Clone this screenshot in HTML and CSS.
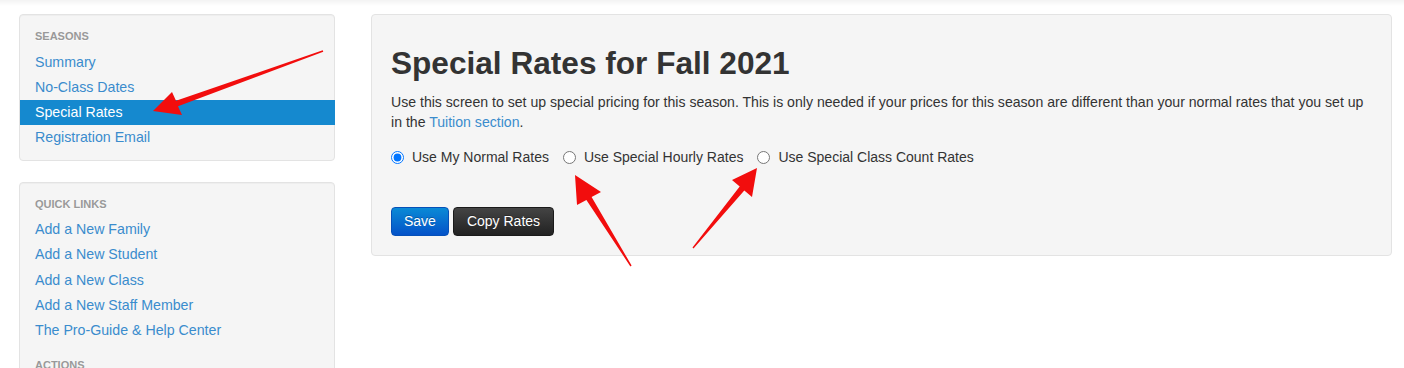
FILE: index.html
```html
<!DOCTYPE html>
<html>
<head>
<meta charset="utf-8">
<link rel="stylesheet" href="styles.css">
</head>
<body>
<div class="topshade"></div>
<div class="layout">
  <aside class="sidebar">
    <div class="well">
      <ul class="nav-list">
        <li class="nav-header">Seasons</li>
        <li><a href="#">Summary</a></li>
        <li><a href="#">No-Class Dates</a></li>
        <li class="active"><a href="#">Special Rates</a></li>
        <li><a href="#">Registration Email</a></li>
      </ul>
    </div>
    <div class="well">
      <ul class="nav-list">
        <li class="nav-header">Quick Links</li>
        <li><a href="#">Add a New Family</a></li>
        <li><a href="#">Add a New Student</a></li>
        <li><a href="#">Add a New Class</a></li>
        <li><a href="#">Add a New Staff Member</a></li>
        <li><a href="#">The Pro-Guide &amp; Help Center</a></li>
        <li class="nav-header spaced">Actions</li>
      </ul>
    </div>
  </aside>
  <main class="content">
    <div class="panel">
      <h1 class="title">Special Rates for Fall 2021</h1>
      <p class="intro">Use this screen to set up special pricing for this season. This is only needed if your prices for this season are different than your normal rates that you set up in the <a href="#">Tuition section</a>.</p>
      <div class="radios">
        <label class="radio"><input type="radio" name="rates" checked><span>Use My Normal Rates</span></label>
        <label class="radio"><input type="radio" name="rates"><span>Use Special Hourly Rates</span></label>
        <label class="radio"><input type="radio" name="rates"><span>Use Special Class Count Rates</span></label>
      </div>
      <div class="actions">
        <button class="btn btn-primary">Save</button>
        <button class="btn btn-inverse">Copy Rates</button>
      </div>
    </div>
  </main>
</div>
<svg class="annotations" width="1404" height="368" viewBox="0 0 1404 368">
  <polygon fill="#f20d0d" points="322.75,50.3 176,100.7 172,92 153,111 182,115 178,106.3 323.25,51.7"/>
  <polygon fill="#f20d0d" points="630.4,266.4 586.4,200.1 577,205 575,175 601,192 591.6,196.9 631.6,265.6"/>
  <polygon fill="#f20d0d" points="692.5,247.6 739.7,186.6 732,180 757,168 752,197 744.3,190.4 693.5,248.4"/>
</svg>
</body>
</html>
```

FILE: styles.css
```css
html, body {
  margin: 0;
  padding: 0;
  background: #fff;
  height: 368px;
  overflow: hidden;
}
body {
  font-family: "Liberation Sans", Arial, sans-serif;
  font-size: 14px;
  line-height: 20px;
  color: #333;
  position: relative;
}
.topshade {
  height: 6px;
  background: linear-gradient(#f3f3f3, #fff);
}
.layout {
  display: flex;
  align-items: flex-start;
  gap: 36px;
  padding: 8px 12px 0 19px;
}
.sidebar {
  width: 316px;
  flex: none;
  display: flex;
  flex-direction: column;
  gap: 21px;
}
.well {
  background: #f5f5f5;
  border: 1px solid #e3e3e3;
  border-radius: 4px;
  padding: 9px 0;
  box-shadow: inset 0 1px 1px rgba(0,0,0,.03);
}
.nav-list {
  list-style: none;
  margin: 0;
  padding: 0;
}
.nav-header {
  font-size: 11px;
  font-weight: bold;
  line-height: 25px;
  height: 25.5px;
  padding: 0 15px;
  color: #999;
  text-transform: uppercase;
  text-shadow: 0 1px 0 rgba(255,255,255,.5);
}
.nav-header.spaced {
  margin-top: 9px;
}
.nav-list a {
  display: block;
  padding: 3px 15px;
  line-height: 19.3px;
  font-size: 14.2px;
  color: #3a8ccd;
  text-decoration: none;
}
.nav-list .active a {
  background: #1589cf;
  color: #fff;
  margin-right: -1px;
}
.content {
  flex: 1;
}
.panel {
  background: #f5f5f5;
  border: 1px solid #e3e3e3;
  border-radius: 4px;
  padding: 19px;
}
.title {
  font-size: 31.6px;
  line-height: 40px;
  font-weight: bold;
  margin: 9px 0 9px;
  color: #333;
}
.intro {
  margin: 0 0 15px;
  padding-right: 6px;
  line-height: 20px;
  font-size: 14.1px;
}
.intro a {
  color: #3a8ccd;
  text-decoration: none;
}
.radios {
  display: flex;
  align-items: center;
  height: 20px;
  gap: 14px;
  font-size: 14px;
}
.radio {
  display: flex;
  align-items: center;
  gap: 8px;
  cursor: pointer;
}
.radio input {
  margin: 0;
  width: 13px;
  height: 13px;
  flex: none;
}
.actions {
  display: flex;
  gap: 4px;
  margin-top: 40px;
}
.btn {
  font-family: "Liberation Sans", Arial, sans-serif;
  font-size: 14px;
  line-height: 19px;
  padding: 4px 12px;
  border-radius: 4px;
  color: #fff;
  cursor: pointer;
  text-shadow: 0 -1px 0 rgba(0,0,0,.25);
}
.btn-primary {
  background: linear-gradient(#0a8ad6, #0452c8);
  border: 1px solid #0550b8;
}
.btn-inverse {
  background: linear-gradient(#444, #222);
  border: 1px solid #1a1a1a;
  padding: 4px 13px;
}
.annotations {
  position: absolute;
  left: 0;
  top: 0;
  pointer-events: none;
}
```
